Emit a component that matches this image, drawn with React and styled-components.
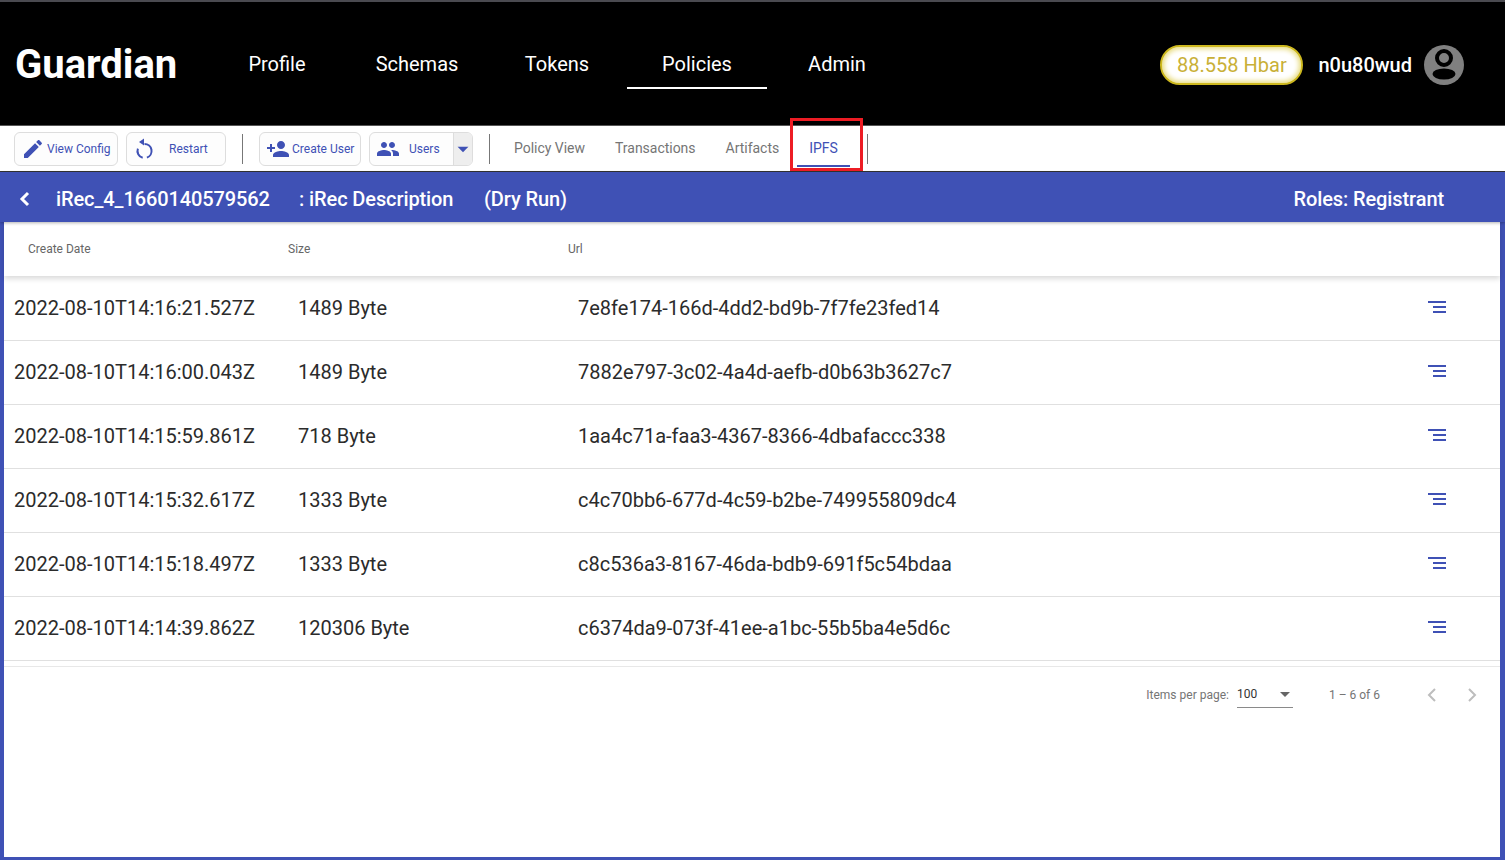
import React from "react";
import styled, { createGlobalStyle } from "styled-components";

const GlobalStyle = createGlobalStyle`
  html, body {
    margin: 0;
    padding: 0;
    background: #fff;
    overflow: hidden;
  }
  * {
    box-sizing: border-box;
  }
`;

const Page = styled.div`
  position: relative;
  width: 1505px;
  height: 860px;
  display: flex;
  flex-direction: column;
  font-family: Roboto, "Liberation Sans", sans-serif;
  border-top: 2px solid #4a4a50;
`;

const Header = styled.header`
  height: 124px;
  flex: none;
  display: flex;
  align-items: center;
  background: #000;
  color: #fff;
  padding: 0 41px 0 15px;
  border-bottom: 1px solid #555;
`;

const Logo = styled.div`
  width: 192px;
  padding-top: 2px;
  font-size: 40px;
  font-weight: 700;
`;

const Nav = styled.nav`
  display: flex;
  height: 50px;
`;

const NavItem = styled.a`
  width: 140px;
  height: 50px;
  padding-top: 2px;
  display: flex;
  align-items: center;
  justify-content: center;
  font-size: 20px;
  border-bottom: 2px solid ${(p) => (p.$active ? "#fff" : "transparent")};
`;

const Account = styled.div`
  margin-left: auto;
  padding-top: 2px;
  display: flex;
  align-items: center;
`;

const Balance = styled.div`
  width: 143px;
  height: 40px;
  border-radius: 20px;
  border: 2px solid #cdb81e;
  background: #fff;
  box-shadow: inset 0 0 5px 2px #e8dc80;
  color: #c9b037;
  font-size: 20px;
  display: flex;
  align-items: center;
  justify-content: center;
`;

const UserName = styled.div`
  margin: 0 12px 0 15px;
  font-size: 20px;
  font-weight: 500;
`;

const Toolbar = styled.div`
  height: 46px;
  flex: none;
  display: flex;
  align-items: center;
  padding-left: 14px;
  background: #fff;
  border-bottom: 1px solid #333;
`;

const ToolButton = styled.button`
  width: ${(p) => p.$width}px;
  height: 34px;
  margin-right: 8px;
  padding: 0 0 0 ${(p) => p.$pad || 0}px;
  display: flex;
  align-items: center;
  border: 1px solid #ddd;
  border-radius: 6px;
  background: #fdfdfd;
  color: #3f51b5;
  font-family: inherit;
  font-size: 12px;
`;

const ButtonLabel = styled.span`
  margin-left: ${(p) => p.$gap}px;
  text-align: left;
  white-space: nowrap;
`;

const SplitCaret = styled.span`
  margin-left: auto;
  width: 19px;
  height: 32px;
  display: flex;
  align-items: center;
  justify-content: center;
  background: #eee;
  border-left: 1px solid #ddd;
  border-radius: 0 5px 5px 0;
  svg {
    flex: none;
  }
`;

const Divider = styled.div`
  width: 1px;
  height: 30px;
  background: #777;
  margin: ${(p) => p.$margin};
`;

const Tabs = styled.div`
  display: flex;
  height: 34px;
  margin-top: 2px;
  gap: 6px;
`;

const Tab = styled.div`
  padding: 0 12px 2px;
  display: flex;
  align-items: center;
  font-size: 14px;
  letter-spacing: -0.02px;
  color: ${(p) => (p.$active ? "#3f51b5" : "#757575")};
  border-bottom: 2px solid ${(p) => (p.$active ? "#3f51b5" : "transparent")};
`;

const TitleBar = styled.div`
  height: 50px;
  flex: none;
  display: flex;
  align-items: center;
  padding: 4px 61px 0 19px;
  background: #3f51b5;
  color: #fff;
  font-size: 20px;
  font-weight: 500;
  letter-spacing: -0.1px;
  box-shadow: 0 1px 3px rgba(0, 0, 0, 0.3);
  z-index: 2;
`;

const PolicyName = styled.span`
  margin-left: 25px;
  width: 243px;
`;

const PolicyDescription = styled.span`
  width: 185px;
`;

const Roles = styled.span`
  margin-left: auto;
`;

const Content = styled.main`
  flex: 1;
  background: #fff;
  border-left: 4px solid #3f51b5;
  border-right: 5px solid #3f51b5;
  border-bottom: 3px solid #3f51b5;
`;

const HeadRow = styled.div`
  height: 54px;
  margin-bottom: 1px;
  display: grid;
  grid-template-columns: 260px 280px 1fr;
  align-items: center;
  padding-left: 24px;
  font-size: 12px;
  font-weight: 400;
  color: #666;
  box-shadow: 0 3px 5px rgba(0, 0, 0, 0.14);
  position: relative;
`;

const Row = styled.div`
  height: 64px;
  display: grid;
  grid-template-columns: 284px 280px 1fr 18px;
  align-items: center;
  padding: 0 54px 2px 10px;
  font-size: 20px;
  color: #2b2b2b;
  border-bottom: 1px solid #e0e0e0;
`;

const SortSvg = styled.svg`
  margin-bottom: 2px;
`;

const Footer = styled.div`
  margin-top: 5px;
  height: 56px;
  display: flex;
  align-items: center;
  justify-content: flex-end;
  padding-right: 8px;
  border-top: 1px solid #e8e8e8;
  font-size: 12px;
  color: #757575;
`;

const PageSize = styled.div`
  width: 56px;
  height: 26px;
  margin: 0 36px 0 8px;
  display: flex;
  align-items: center;
  justify-content: space-between;
  padding-right: 3px;
  color: #333;
  border-bottom: 1px solid #8a8a8a;
`;

const PageButton = styled.div`
  width: 40px;
  display: flex;
  justify-content: center;
  margin-left: ${(p) => p.$gap || 0}px;
`;

const Highlight = styled.div`
  position: absolute;
  left: 790px;
  top: 116px;
  width: 73px;
  height: 53px;
  border: 3px solid #ed1c24;
  z-index: 3;
  pointer-events: none;
`;

const Icon = ({ d, size = 24, color = "#3f51b5" }) => (
  <svg width={size} height={size} viewBox="0 0 24 24" fill={color}>
    <path d={d} />
  </svg>
);

const ICONS = {
  edit: "M3 17.25V21h3.75L17.81 9.94l-3.75-3.75L3 17.25zM20.71 7.04c.39-.39.39-1.02 0-1.41l-2.34-2.34c-.39-.39-1.02-.39-1.41 0l-1.83 1.83 3.75 3.75 1.83-1.83z",
  personAdd: "M15 12c2.21 0 4-1.79 4-4s-1.79-4-4-4-4 1.79-4 4 1.79 4 4 4zm-9-2V7H4v3H1v2h3v3h2v-3h3v-2H6zm9 4c-2.67 0-8 1.34-8 4v2h16v-2c0-2.66-5.33-4-8-4z",
  people: "M16 11c1.66 0 2.99-1.34 2.99-3S17.66 5 16 5c-1.66 0-3 1.34-3 3s1.34 3 3 3zm-8 0c1.66 0 2.99-1.34 2.99-3S9.66 5 8 5C6.34 5 5 6.34 5 8s1.34 3 3 3zm0 2c-2.33 0-7 1.17-7 3.5V19h14v-2.5c0-2.33-4.67-3.5-7-3.5zm8 0c-.29 0-.62.02-.97.05 1.16.84 1.97 1.97 1.97 3.45V19h6v-2.5c0-2.33-4.67-3.5-7-3.5z",
  caret: "M7 10l5 5 5-5z",
};

const RestartIcon = () => (
  <svg width="24" height="24" viewBox="0.5 0 24 24" fill="none" stroke="#3f51b5" strokeWidth="2">
    <path d="M12 7A7 7 0 0 1 14.4 20.6M10.2 20.8A7 7 0 0 1 5.4 11.6" />
    <path d="M11.5 1.5v7L6.5 5z" fill="#3f51b5" stroke="none" />
  </svg>
);

const Avatar = () => (
  <svg width="40" height="40" viewBox="0 0 40 40">
    <circle cx="20" cy="20" r="20" fill="#808080" />
    <circle cx="20" cy="13" r="7" fill="none" stroke="#000" strokeWidth="4" />
    <ellipse cx="20" cy="29" rx="11.5" ry="5.5" fill="#000" />
  </svg>
);

const SortIcon = () => (
  <SortSvg width="18" height="12" viewBox="0 0 18 12" fill="#3f51b5">
    <rect x="0" y="0" width="18" height="2" />
    <rect x="5" y="5" width="13" height="2" />
    <rect x="5" y="10" width="13" height="2" />
  </SortSvg>
);

const Chevron = ({ dir, color, size = 12, width = 2 }) => (
  <svg width={size} height={size + 4} viewBox="0 0 12 16" fill="none" stroke={color} strokeWidth={width}>
    <path d={dir === "left" ? "M9 2L3 8l6 6" : "M3 2l6 6-6 6"} />
  </svg>
);

const files = [
  ["2022-08-10T14:16:21.527Z", "1489 Byte", "7e8fe174-166d-4dd2-bd9b-7f7fe23fed14"],
  ["2022-08-10T14:16:00.043Z", "1489 Byte", "7882e797-3c02-4a4d-aefb-d0b63b3627c7"],
  ["2022-08-10T14:15:59.861Z", "718 Byte", "1aa4c71a-faa3-4367-8366-4dbafaccc338"],
  ["2022-08-10T14:15:32.617Z", "1333 Byte", "c4c70bb6-677d-4c59-b2be-749955809dc4"],
  ["2022-08-10T14:15:18.497Z", "1333 Byte", "c8c536a3-8167-46da-bdb9-691f5c54bdaa"],
  ["2022-08-10T14:14:39.862Z", "120306 Byte", "c6374da9-073f-41ee-a1bc-55b5ba4e5d6c"],
];

const navItems = ["Profile", "Schemas", "Tokens", "Policies", "Admin"];

function App() {
  return (
    <Page>
      <GlobalStyle />
      <Header>
        <Logo>Guardian</Logo>
        <Nav>
          {navItems.map((item) => (
            <NavItem key={item} $active={item === "Policies"}>{item}</NavItem>
          ))}
        </Nav>
        <Account>
          <Balance>88.558 Hbar</Balance>
          <UserName>n0u80wud</UserName>
          <Avatar />
        </Account>
      </Header>

      <Toolbar>
        <ToolButton $width={104} $pad={6}>
          <Icon d={ICONS.edit} />
          <ButtonLabel $gap={2}>View Config</ButtonLabel>
        </ToolButton>
        <ToolButton $width={100} $pad={6}>
          <RestartIcon />
          <ButtonLabel $gap={12}>Restart</ButtonLabel>
        </ToolButton>
        <Divider $margin="0 16px 0 8px" />
        <ToolButton $width={102} $pad={6}>
          <Icon d={ICONS.personAdd} />
          <ButtonLabel $gap={2}>Create User</ButtonLabel>
        </ToolButton>
        <ToolButton $width={104} $pad={6}>
          <Icon d={ICONS.people} />
          <ButtonLabel $gap={9}>Users</ButtonLabel>
          <SplitCaret><Icon d={ICONS.caret} size={26} /></SplitCaret>
        </ToolButton>
        <Divider $margin="0 12px 0 8px" />
        <Tabs>
          <Tab>Policy View</Tab>
          <Tab>Transactions</Tab>
          <Tab>Artifacts</Tab>
          <Tab $active>IPFS</Tab>
        </Tabs>
        <Divider $margin="0 0 0 17px" />
      </Toolbar>
      <Highlight />

      <TitleBar>
        <Chevron dir="left" color="#fff" width={3} />
        <PolicyName>iRec_4_1660140579562</PolicyName>
        <PolicyDescription>: iRec Description</PolicyDescription>
        <span>(Dry Run)</span>
        <Roles>Roles: Registrant</Roles>
      </TitleBar>

      <Content>
        <HeadRow>
          <span>Create Date</span>
          <span>Size</span>
          <span>Url</span>
        </HeadRow>
        {files.map(([date, size, url]) => (
          <Row key={url}>
            <span>{date}</span>
            <span>{size}</span>
            <span>{url}</span>
            <SortIcon />
          </Row>
        ))}
        <Footer>
          <span>Items per page:</span>
          <PageSize>
            <span>100</span>
            <svg width="10" height="5" viewBox="0 0 10 5" fill="#666"><path d="M0 0l5 5 5-5z" /></svg>
          </PageSize>
          <span>1 – 6 of 6</span>
          <PageButton $gap={32}><Chevron dir="left" color="#bdbdbd" /></PageButton>
          <PageButton><Chevron dir="right" color="#bdbdbd" /></PageButton>
        </Footer>
      </Content>
    </Page>
  );
}

export default App;
